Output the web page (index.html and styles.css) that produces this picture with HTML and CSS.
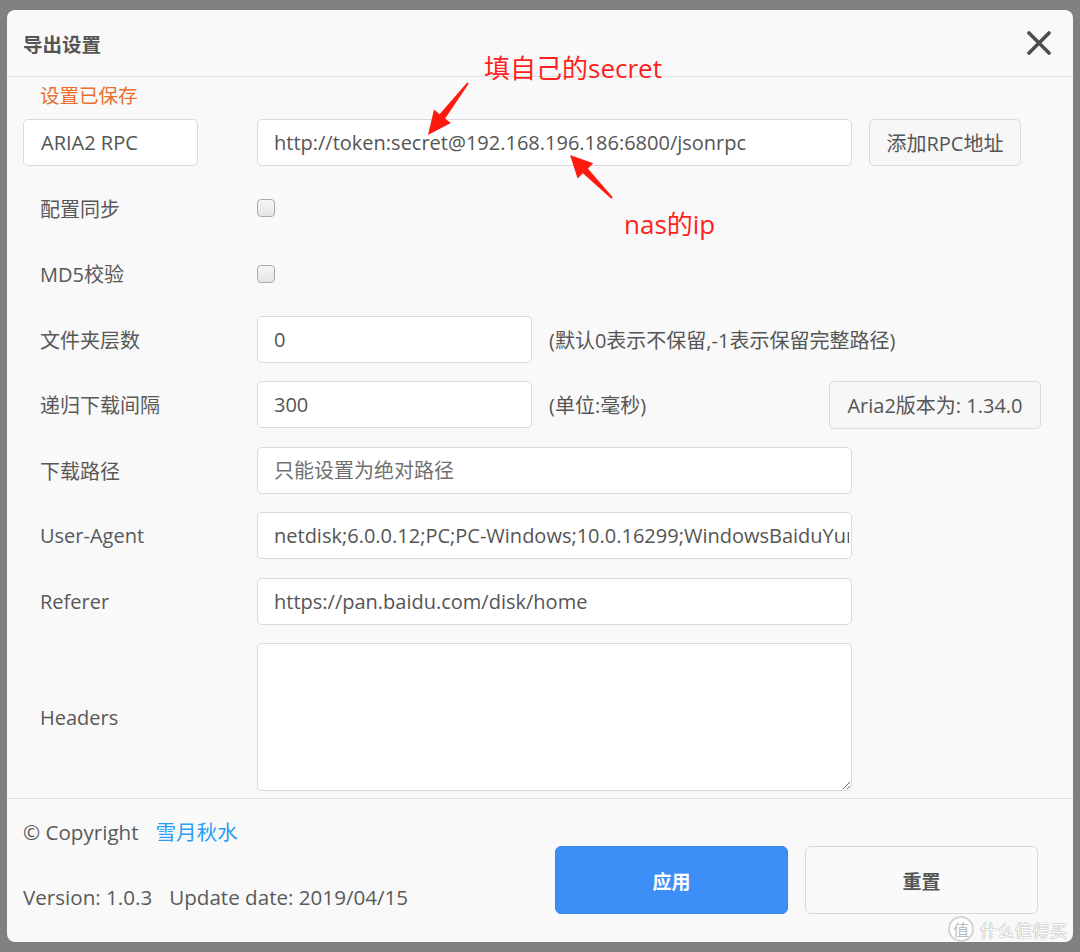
FILE: index.html
```html
<!DOCTYPE html>
<html lang="zh-CN">
<head>
<meta charset="utf-8">
<title>导出设置</title>
<link rel="stylesheet" href="styles.css">
</head>
<body>
<div class="dialog">
  <header class="dlg-head">
    <h2 class="dlg-title">导出设置</h2>
    <button class="close" aria-label="close">
      <svg width="24" height="24" viewBox="0 0 24 24"><path d="M2 2 L22 22 M22 2 L2 22" stroke="#4d4d4d" stroke-width="3.6" stroke-linecap="round" fill="none"/></svg>
    </button>
  </header>
  <div class="dlg-body">
    <div class="status">设置已保存</div>
    <div class="form">
      <div class="row">
        <div class="rpc-name">ARIA2 RPC</div>
        <input class="field wide" type="text" value="http://token:secret@192.168.196.186:6800/jsonrpc">
        <button class="btn add-rpc">添加RPC地址</button>
      </div>
      <div class="row">
        <span class="label">配置同步</span>
        <span class="check"></span>
      </div>
      <div class="row">
        <span class="label">MD5校验</span>
        <span class="check"></span>
      </div>
      <div class="row">
        <span class="label">文件夹层数</span>
        <input class="field short" type="text" value="0">
        <span class="hint">(默认0表示不保留,-1表示保留完整路径)</span>
      </div>
      <div class="row">
        <span class="label">递归下载间隔</span>
        <input class="field short" type="text" value="300">
        <span class="hint">(单位:毫秒)</span>
        <button class="btn version">Aria2版本为: 1.34.0</button>
      </div>
      <div class="row">
        <span class="label">下载路径</span>
        <input class="field wide" type="text" placeholder="只能设置为绝对路径">
      </div>
      <div class="row">
        <span class="label">User-Agent</span>
        <input class="field wide" type="text" value="netdisk;6.0.0.12;PC;PC-Windows;10.0.16299;WindowsBaiduYunGuanJia">
      </div>
      <div class="row">
        <span class="label">Referer</span>
        <input class="field wide" type="text" value="https://pan.baidu.com/disk/home">
      </div>
      <div class="row tall">
        <span class="label">Headers</span>
        <textarea class="field wide area"></textarea>
      </div>
    </div>
  </div>
  <footer class="dlg-foot">
    <div class="info">
      <div class="info-line"><span>© Copyright</span><span class="author">雪月秋水</span></div>
      <div class="info-line"><span>Version: 1.0.3</span><span>Update date: 2019/04/15</span></div>
    </div>
    <div class="actions">
      <button class="btn-main primary">应用</button>
      <button class="btn-main">重置</button>
    </div>
  </footer>
</div>

<svg class="annot" width="1080" height="952" viewBox="0 0 1080 952">
  <polygon fill="#ff1a10" points="468.8,83.6 445.2,118.4 450.8,123.0 428,135 434.0,109.6 439.6,114.2 467.2,82.4"/>
  <polygon fill="#ff1a10" points="612.7,197.3 587.9,168.4 593.3,163.2 570,155 577.6,178.4 582.9,173.2 611.3,198.7"/>
</svg>
<div class="note note1">填自己的secret</div>
<div class="note note2">nas的ip</div>

<div class="watermark"><span class="wm-circle">值</span><span class="wm-text">什么值得买</span></div>
</body>
</html>
```

FILE: styles.css
```css
html, body {
  margin: 0;
}
body {
  width: 1080px;
  height: 952px;
  box-sizing: border-box;
  padding: 10px 0 0 7px;
  background: #808080;
  overflow: hidden;
  position: relative;
  font-family: "Open Sans", "Noto Sans CJK SC", sans-serif;
  color: #555;
}

.dialog {
  width: 1066px;
  background: #f9f9f9;
  border-radius: 8px;
}

.dlg-head {
  height: 66px;
  border-bottom: 1px solid #dcdcdc;
  display: flex;
  align-items: center;
  justify-content: space-between;
  padding: 0 22px 0 16px;
}
.dlg-title {
  margin: 0;
  font-size: 19.5px;
  font-weight: bold;
  color: #555;
  font-family: "Noto Sans CJK SC", sans-serif;
}
.close {
  border: 0;
  background: none;
  padding: 0;
  width: 24px;
  height: 24px;
  display: flex;
}

.dlg-body {
  padding: 0 32px 7px 16px;
}
.status {
  color: #ea6f2c;
  font-size: 19.5px;
  line-height: 24px;
  padding: 6px 0 0 17px;
  margin-bottom: 12px;
  font-family: "Noto Sans CJK SC", sans-serif;
}

.form {
  display: flex;
  flex-direction: column;
  gap: 18.5px;
}
.row {
  display: flex;
  align-items: center;
  height: 47px;
  font-size: 20px;
}
.row.tall {
  height: 148px;
}
.label {
  width: 234px;
  box-sizing: border-box;
  padding-left: 17px;
  flex: none;
  color: #585858;
}
.rpc-name {
  width: 175px;
  height: 47px;
  box-sizing: border-box;
  margin-right: 59px;
  flex: none;
  background: #fff;
  border: 1px solid #dadada;
  border-radius: 5px;
  padding-left: 17px;
  display: flex;
  align-items: center;
  color: #555;
}
.field {
  height: 47px;
  box-sizing: border-box;
  background: #fff;
  border: 1px solid #dadada;
  border-radius: 5px;
  padding: 0 2px 0 16px;
  font: inherit;
  font-size: 20px;
  color: #555;
  outline: none;
  flex: none;
}
.field::placeholder {
  color: #707070;
  font-family: "Noto Sans CJK SC", sans-serif;
}
.field.wide {
  width: 595px;
}
.field.short {
  width: 275px;
}
.field.area {
  height: 148px;
  resize: both;
}
.check {
  width: 18px;
  height: 18px;
  box-sizing: border-box;
  border: 1px solid #aaa;
  border-radius: 4px;
  background: linear-gradient(#f6f6f6, #e5e5e5);
}
.hint {
  margin-left: 17px;
  color: #555;
  font-size: 20px;
}
.btn {
  height: 47px;
  box-sizing: border-box;
  border: 1px solid #dadada;
  border-radius: 5px;
  background: #f7f7f7;
  font: inherit;
  font-size: 20px;
  color: #555;
  padding: 0;
}
.add-rpc {
  width: 152px;
  margin-left: 17px;
}
.version {
  width: 212px;
  height: 48px;
  margin-left: auto;
}

.dlg-foot {
  border-top: 1px solid #dcdcdc;
  display: flex;
  align-items: flex-end;
  justify-content: space-between;
  padding: 20px 35px 28px 16px;
}
.info {
  display: flex;
  flex-direction: column;
  gap: 39px;
  padding-bottom: 4px;
  font-size: 20.6px;
  color: #5a5a5a;
}
.info-line {
  line-height: 26px;
  display: flex;
  gap: 17px;
}
.author {
  color: #2a9ef2;
}
.actions {
  display: flex;
  gap: 17px;
}
.btn-main {
  width: 233px;
  height: 68px;
  border: 1px solid #d8d8d8;
  border-radius: 6px;
  background: #fafafa;
  font-family: "Noto Sans CJK SC", sans-serif;
  font-size: 19px;
  font-weight: bold;
  color: #555;
}
.btn-main.primary {
  background: #3e8ef7;
  border-color: #3a86ec;
  color: #fff;
}

.annot {
  position: absolute;
  left: 0;
  top: 0;
  pointer-events: none;
}
.note {
  position: absolute;
  color: #ff1f1f;
  font-size: 26px;
  line-height: 30px;
  font-family: "Open Sans", "Noto Sans CJK SC", sans-serif;
  white-space: nowrap;
}
.note1 {
  left: 484px;
  top: 53px;
}
.note2 {
  left: 624px;
  top: 209px;
}

.watermark {
  position: absolute;
  left: 948px;
  top: 916px;
  display: flex;
  align-items: center;
  gap: 6px;
  color: #fff;
  font-family: "Noto Sans CJK SC", sans-serif;
  text-shadow: 0 0 1px #999, 0 0 1px #999;
}
.wm-circle {
  width: 26px;
  height: 26px;
  border-radius: 50%;
  border: 2px solid #d4d4d4;
  background: #fff;
  color: #bbb;
  text-shadow: none;
  font-size: 16px;
  display: flex;
  align-items: center;
  justify-content: center;
  box-sizing: border-box;
}
.wm-text {
  font-size: 17px;
  letter-spacing: 0.5px;
}
```
